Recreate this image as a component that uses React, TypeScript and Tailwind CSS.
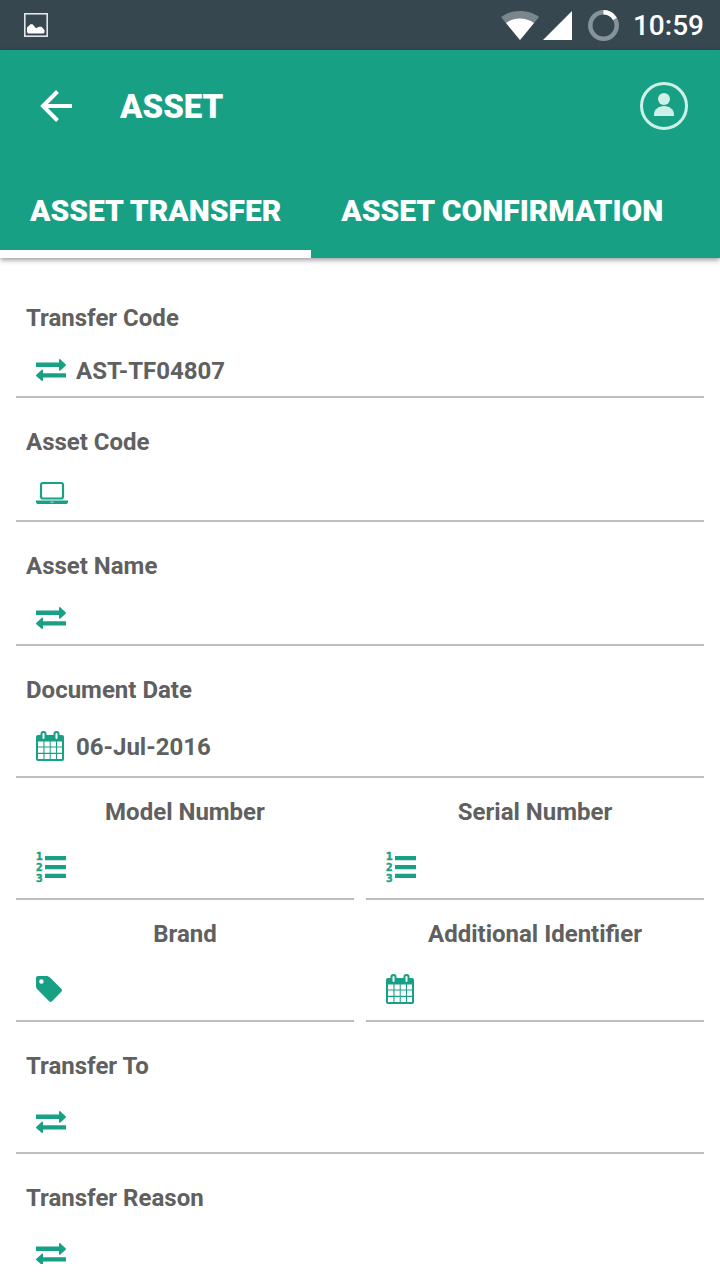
import { useState } from 'react';
import type { ReactNode } from 'react';

function TransferIcon() {
    return (
        <svg width="30" height="22" viewBox="0 0 30 22" fill="currentColor">
            <path d="M0 3.500h23V.9c0-.8.8-1.100 1.400-.5l5.200 4.800c.5.500.5 1.100 0 1.500l-5.200 4.700c-.6.600-1.400.3-1.400-.5V8H0z" />
            <path d="M30 14.200H7v-2.800c0-.8-.8-1.100-1.400-.5L.4 15.700c-.5.500-.5 1.100 0 1.500l5.200 4.500c.6.500 1.400.2 1.400-.5v-2.600h23z" />
        </svg>
    );
}

function LaptopIcon() {
    return (
        <svg width="32" height="24" viewBox="0 0 32 24" fill="currentColor">
            <rect x="5" y="1" width="22" height="15.500" rx="2" fill="none" stroke="currentColor" strokeWidth="2.200" />
            <path fillRule="evenodd" d="M0 18.500h32v1.700c0 1-1.200 1.800-2.700 1.800H2.700C1.200 22 0 21.200 0 20.200zM14.500 19.700v.8h3v-.8z" />
        </svg>
    );
}

function CalendarIcon() {
    return (
        <svg width="28" height="30" viewBox="0 0 28 30">
            <rect x="0" y="4" width="28" height="26" rx="2" fill="currentColor" />
            <rect x="4.500" y="0" width="6" height="9.500" rx="2.800" fill="currentColor" />
            <rect x="17.500" y="0" width="6" height="9.500" rx="2.800" fill="currentColor" />
            <path
                fill="#fff"
                d="M2 10.500h5.400v5H2zM8.500 10.500h5.200v5H8.500zM14.700 10.500H20v5h-5.300zM21 10.500h5v5h-5zM2 16.600h5.400v5.200H2zM8.500 16.600h5.200v5.200H8.500zM14.700 16.600H20v5.200h-5.300zM21 16.600h5v5.200h-5zM2 22.900h5.400V28H2zM8.500 22.900h5.200V28H8.500zM14.700 22.900H20V28h-5.300zM21 22.900h5V28h-5z"
            />
            <rect x="6.500" y="2" width="2" height="6" rx="1" fill="#fff" />
            <rect x="19.500" y="2" width="2" height="6" rx="1" fill="#fff" />
        </svg>
    );
}

function NumberIcon() {
    return (
        <svg width="30" height="38" viewBox="0 -4 30 38" fill="currentColor" className="overflow-visible">
            <path d="M9 4h21v4.300H9zM9 13h21v4.300H9zM9 21.700h21V26H9z" />
            <g fontFamily="'DejaVu Sans Mono', monospace" fontWeight="700" fontSize="11" stroke="currentColor" strokeWidth="0.500">
                <text x="0" y="8">1</text>
                <text x="0" y="19">2</text>
                <text x="0" y="30">3</text>
            </g>
        </svg>
    );
}

function TagIcon() {
    return (
        <svg width="26" height="26" viewBox="0 0 26 26" fill="currentColor">
            <path
                fillRule="evenodd"
                d="M2 0h8.500c1.200 0 2.600.6 3.500 1.500l11.300 11.300c.9.900.9 2.100 0 3l-9.200 9.400c-.9.900-2.100.9-3 0L1.500 13.600C.6 12.700 0 11.400 0 10.200V2C0 .9.900 0 2 0zM5.400 3.300a2.200 2.200 0 1 0 0 4.400 2.200 2.200 0 0 0 0-4.400z"
            />
        </svg>
    );
}

function StatusBar() {
    return (
        <div className="flex h-[50px] shrink-0 items-center bg-[#37474f] pl-6 pr-4 text-white">
            <svg width="24" height="24" viewBox="0 0 24 24">
                <rect x=".8" y=".8" width="22.400" height="22.400" fill="none" stroke="#dfe5e8" strokeWidth="1.600" />
                <path d="M3 19v-4.500l3.500-3.200h2l3.500 4 3-1.500h2.500l3 3.200v2.500l-1 1H4z" fill="#fff" />
            </svg>
            <div className="ml-auto flex items-center">
                <svg width="38" height="29" viewBox="0 0 38 29">
                    <path d="M19 29 0 6C5 2 12 0 19 0s14 2 19 6z" fill="#7a868c" />
                    <path d="M19 29 5 12c4-3 9-4.500 14-4.500S29 9 33 12z" fill="#fff" />
                </svg>
                <svg className="ml-1" width="29" height="29" viewBox="0 0 29 29">
                    <path d="M29 0v29H0z" fill="#fff" />
                </svg>
                <svg className="ml-4" width="31" height="31" viewBox="0 0 31 31" fill="none" strokeWidth="4.500">
                    <circle cx="15.500" cy="15.500" r="13.200" stroke="#87939a" />
                    <path d="M15.500 2.300a13.200 13.200 0 0 1 11.400 6.600" stroke="#fff" />
                </svg>
                <span className="ml-3.5 pt-0.5 text-[28px] leading-8 font-medium">10:59</span>
            </div>
        </div>
    );
}

const tabs = ['ASSET TRANSFER', 'ASSET CONFIRMATION'];

function Header() {
    const [active, setActive] = useState(tabs[0]);

    return (
        <header className="relative z-10 shrink-0 bg-[#18a085] text-white shadow-[0_2px_5px_rgba(0,0,0,0.4)]">
            <div className="flex h-28 items-center pl-10 pr-8">
                <button type="button" aria-label="Back">
                    <svg className="block" width="32" height="32" viewBox="0 0 32 32" fill="none" stroke="currentColor" strokeWidth="4">
                        <path d="M32 16H3M17.500 1.500 3 16l14.500 14.500" />
                    </svg>
                </button>
                <h1 className="ml-12 pt-0.5 text-[33px] leading-10 font-black">ASSET</h1>
                <button type="button" aria-label="Profile" className="ml-auto text-[#cdf1e8]">
                    <svg className="block" width="48" height="48" viewBox="0 0 48 48" fill="currentColor">
                        <circle cx="24" cy="24" r="22.500" fill="none" stroke="currentColor" strokeWidth="3" />
                        <circle cx="24" cy="17" r="6" />
                        <path d="M14 34v-1.500C14 27.500 18.500 24 24 24s10 3.500 10 8.500V34z" />
                    </svg>
                </button>
            </div>
            <nav className="flex h-24">
                {tabs.map((tab) => (
                    <button
                        key={tab}
                        type="button"
                        onClick={() => setActive(tab)}
                        className={
                            tab === active
                                ? 'border-y-8 border-t-transparent border-b-white px-[30px] text-[30px] font-black whitespace-nowrap'
                                : 'border-y-8 border-transparent px-[30px] text-[30px] font-black whitespace-nowrap'
                        }
                    >
                        {tab}
                    </button>
                ))}
            </nav>
        </header>
    );
}

interface FieldProps {
    id: string;
    label: string;
    icon: ReactNode;
    value?: string;
    tall?: boolean;
}

function Field({ id, label, icon, value, tall }: FieldProps) {
    return (
        <div className="border-b-2 border-[#bdbdbd] pt-7">
            <label htmlFor={id} className="block pl-2.5 text-2xl font-bold">{label}</label>
            <div className={tall ? 'mt-2.5 flex h-[60px] items-center gap-2 pl-5' : 'mt-2.5 flex h-[52px] items-center gap-2 pl-5'}>
                <span className="w-8 text-[#18a085]">{icon}</span>
                <input id={id} type="text" defaultValue={value} className="h-full min-w-0 flex-1 pt-0.5 text-2xl font-bold outline-none" />
            </div>
        </div>
    );
}

function HalfField({ id, label, icon }: FieldProps) {
    return (
        <div className="border-b-2 border-[#bdbdbd] pt-[18px]">
            <label htmlFor={id} className="block text-center text-2xl font-bold">{label}</label>
            <div className="mt-2 flex h-[62px] items-center gap-2 pl-5">
                <span className="w-8 text-[#18a085]">{icon}</span>
                <input id={id} type="text" className="h-full min-w-0 flex-1 pt-0.5 text-2xl font-bold outline-none" />
            </div>
        </div>
    );
}

export default function App() {
    return (
        <div className="flex h-screen flex-col bg-white font-[Roboto,sans-serif] text-[#606060] [&_span>svg]:block">
            <StatusBar />
            <Header />
            <main className="my-4 min-h-0 flex-1 overflow-hidden px-4">
                <form>
                    <Field id="transfer-code" label="Transfer Code" icon={<TransferIcon />} value="AST-TF04807" />
                    <Field id="asset-code" label="Asset Code" icon={<LaptopIcon />} />
                    <Field id="asset-name" label="Asset Name" icon={<TransferIcon />} />
                    <Field id="document-date" label="Document Date" icon={<CalendarIcon />} value="06-Jul-2016" tall />
                    <div className="grid grid-cols-2 gap-x-3">
                        <HalfField id="model-number" label="Model Number" icon={<NumberIcon />} />
                        <HalfField id="serial-number" label="Serial Number" icon={<NumberIcon />} />
                        <HalfField id="brand" label="Brand" icon={<TagIcon />} />
                        <HalfField id="additional-identifier" label="Additional Identifier" icon={<CalendarIcon />} />
                    </div>
                    <Field id="transfer-to" label="Transfer To" icon={<TransferIcon />} tall />
                    <Field id="transfer-reason" label="Transfer Reason" icon={<TransferIcon />} tall />
                </form>
            </main>
        </div>
    );
}
